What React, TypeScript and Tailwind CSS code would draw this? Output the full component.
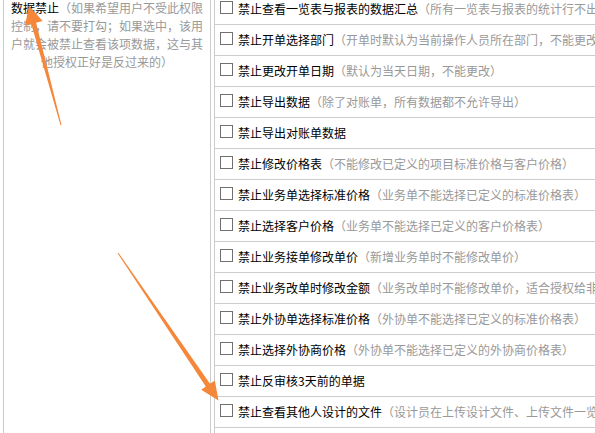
import React from 'react';

const rows: { label: string; note?: string }[] = [
    { label: '禁止查看一览表与报表的数据汇总', note: '（所有一览表与报表的统计行不出现）' },
    { label: '禁止开单选择部门', note: '（开单时默认为当前操作人员所在部门，不能更改）' },
    { label: '禁止更改开单日期', note: '（默认为当天日期，不能更改）' },
    { label: '禁止导出数据', note: '（除了对账单，所有数据都不允许导出）' },
    { label: '禁止导出对账单数据' },
    { label: '禁止修改价格表', note: '（不能修改已定义的项目标准价格与客户价格）' },
    { label: '禁止业务单选择标准价格', note: '（业务单不能选择已定义的标准价格表）' },
    { label: '禁止选择客户价格', note: '（业务单不能选择已定义的客户价格表）' },
    { label: '禁止业务接单修改单价', note: '（新增业务单时不能修改单价）' },
    { label: '禁止业务改单时修改金额', note: '（业务改单时不能修改单价，适合授权给非财务人员）' },
    { label: '禁止外协单选择标准价格', note: '（外协单不能选择已定义的标准价格表）' },
    { label: '禁止选择外协商价格', note: '（外协单不能选择已定义的外协商价格表）' },
    { label: '禁止反审核3天前的单据' },
    { label: '禁止查看其他人设计的文件', note: '（设计员在上传设计文件、上传文件一览表中只能看到自己的文件）' },
    { label: '' },
];

const Row = ({ label, note }: { label: string; note?: string }) => (
    <div className="h-[31px] border-b border-[#cccccc] flex items-center pl-[5px] whitespace-nowrap">
        {label && (
            <>
                <span className="w-[13px] h-[13px] border border-[#707070] bg-white shrink-0 mb-[3px]" />
                <span className="ml-[5px] text-black">{label}</span>
                {note && <span className="text-[#999999]">{note}</span>}
            </>
        )}
    </div>
);

const App = () => {
    return (
        <div
            className="relative w-[595px] h-[433px] overflow-hidden bg-white text-[12px]"
            style={{ fontFamily: '"Noto Sans CJK SC", "Noto Sans", sans-serif' }}
        >
            <div className="flex mt-[-6px] ml-[3px]">
                <div className="w-[208px] shrink-0 border-l border-r border-[#cccccc] px-[5px] pt-[5px] text-center leading-[18px] text-[#999999] h-[460px]">
                    <span className="text-black">数据禁止</span>
                    （如果希望用户不受此权限控制，请不要打勾；如果选中，该用户就会被禁止查看该项数据，这与其他授权正好是反过来的）
                </div>
                <div className="ml-[3px] flex-1 min-w-[600px] border-l border-[#cccccc]">
                    {rows.map((r, i) => (
                        <Row key={i} label={r.label} note={r.note} />
                    ))}
                </div>
            </div>

            <svg className="absolute left-0 top-0 pointer-events-none" width="595" height="433">
                <polygon
                    fill="#f5873b"
                    points="61.5,125 36.1,22.8 42.6,21.1 29,5.5 25,25.7 31.3,24.1 60.5,125.2"
                />
                <polygon
                    fill="#f5873b"
                    points="118.4,252.7 210,383.7 214.8,380.4 218.5,400.5 201.2,389.8 205.8,386.5 117.6,253.3"
                />
            </svg>
        </div>
    );
};

export default App;
